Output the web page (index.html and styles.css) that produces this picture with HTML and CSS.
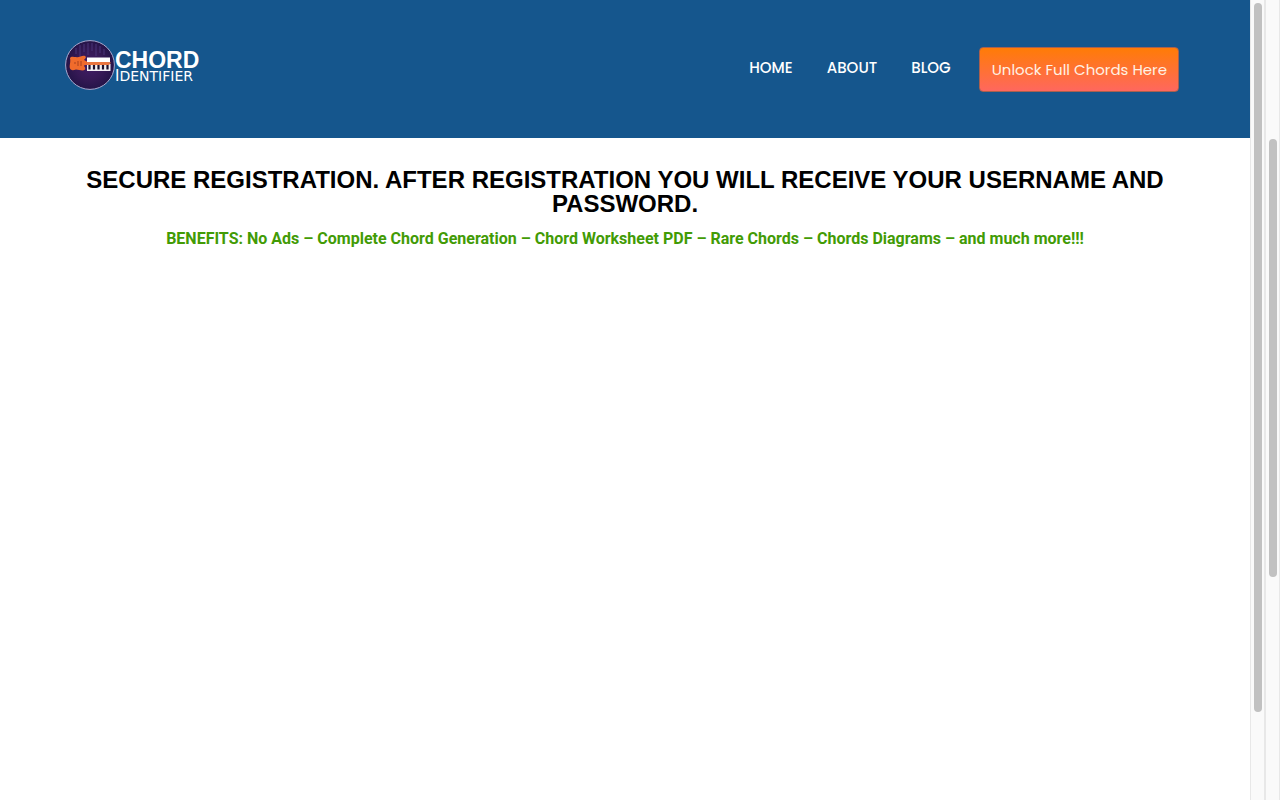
FILE: index.html
```html
<!DOCTYPE html>
<html lang="en">
<head>
  <meta charset="utf-8">
  <meta name="viewport" content="width=device-width, initial-scale=1">
  <title>Chord Identifier</title>
  <link rel="stylesheet" href="styles.css">
</head>
<body>
  <div class="page">
    <header class="site-header">
      <a class="logo" href="#">
        <svg class="logo-mark" viewBox="0 0 50 50" aria-hidden="true">
          <defs>
            <radialGradient id="disc">
              <stop offset="0" stop-color="#421d68"/>
              <stop offset="0.6" stop-color="#351955"/>
              <stop offset="1" stop-color="#251448"/>
            </radialGradient>
          </defs>
          <circle cx="25" cy="25" r="24.4" fill="url(#disc)" stroke="#a9a8cd" stroke-width="1"/>
          <path d="M11 8v6M15 5v12M19 4v8M23 3v12M27 3v8M31 4v12M35 6v7M39 9v6" stroke="#4d397d" stroke-width="1.5" opacity="0.6"/>
          <path d="M22 17.500h23v5H22z" fill="#fff"/>
          <path d="M22 24h23.500v7H22z" fill="#f3f0f4"/>
          <path d="M24.500 24v5.500M29 24v5.500M33.500 24v5.500M38 24v5.500M42.500 24v5.500" stroke="#1c102b" stroke-width="2.2"/>
          <path d="M17 22h25l4 .5-2 2.500H17z" fill="#e9753f"/>
          <path d="M5 18c1-2 4-1 6-1 3 1 6-2 9-1 2 1 0 3-1 4l3 1.500v3l-3 1c0 1 2 2 1 4-2 2-6 0-9 0-3 1-5 1-6-1-1-3 1-6 0-10.500z" fill="#f06b2c"/>
          <path d="M9 23h2M13 21v5M16 21v5" stroke="#a8431f" stroke-width="1"/>
        </svg>
        <span class="logo-text">
          <span class="logo-name">CHORD</span>
          <span class="logo-sub"><span class="logo-initial">I</span>DENTIFIER</span>
        </span>
      </a>
      <nav class="main-nav" aria-label="Main">
        <a class="nav-link" href="#">HOME</a>
        <a class="nav-link" href="#">ABOUT</a>
        <a class="nav-link" href="#">BLOG</a>
        <button class="unlock" type="button">Unlock Full Chords Here</button>
      </nav>
    </header>
    <main class="content">
      <h1 class="title">SECURE REGISTRATION. AFTER REGISTRATION YOU WILL RECEIVE YOUR USERNAME AND PASSWORD.</h1>
      <p class="benefits">BENEFITS: No Ads – Complete Chord Generation – Chord Worksheet PDF – Rare Chords – Chords Diagrams – and much more!!!</p>
    </main>
  </div>
  <div class="track track-inner" aria-hidden="true"><div class="thumb thumb-inner"></div></div>
  <div class="track track-outer" aria-hidden="true"><div class="thumb thumb-outer"></div></div>
</body>
</html>
```
FILE: styles.css
```css
* {
  box-sizing: border-box;
}

body {
  display: flex;
  min-height: 100vh;
  margin: 0;
  background: #fff;
  font-family: "Liberation Sans", Arial, sans-serif;
}

.page {
  flex: 1;
  min-width: 0;
}

.site-header {
  display: flex;
  justify-content: space-between;
  align-items: flex-start;
  padding: 40px 71px 46px 65px;
  background: #15568d;
}

.logo {
  display: flex;
  color: #fff;
  text-decoration: none;
}

.logo-mark {
  width: 50px;
  height: 50px;
}

.logo-text {
  display: flex;
  flex-direction: column;
  padding-top: 10px;
}

.logo-name {
  font-size: 23px;
  font-weight: 700;
  line-height: 20px;
}

.logo-sub {
  font-family: "DejaVu Sans", sans-serif;
  font-size: 14px;
  line-height: 12px;
}

.logo-initial {
  font-size: 15px;
}

.main-nav {
  display: flex;
  align-items: flex-start;
  gap: 34px;
  padding-top: 7px;
  font-family: Poppins, Lato, sans-serif;
}

.nav-link {
  color: #fff;
  font-size: 15px;
  font-weight: 500;
  line-height: 42px;
  text-decoration: none;
}

.unlock {
  height: 45px;
  margin-left: -6px;
  padding: 0 11px 0 12px;
  border: 1px solid #a8604f;
  border-radius: 4px;
  background: linear-gradient(#ff7c06, #ff675e);
  color: #fff1e4;
  font-family: inherit;
  font-size: 15px;
  line-height: 24px;
}

.content {
  padding: 30px 65px;
  text-align: center;
}

.title {
  margin: 0;
  color: #000;
  font-size: 24px;
  line-height: 24px;
}

.benefits {
  margin: 11px 0 0;
  color: #429b05;
  font-family: Roboto, sans-serif;
  font-size: 16px;
  font-weight: 700;
  line-height: 24px;
}

.track {
  display: flex;
  flex-direction: column;
  align-items: center;
  width: 15px;
  background: #fafafa;
  border-left: 1px solid #e8e8e8;
  border-right: 1px solid #e8e8e8;
}

.thumb {
  width: 8px;
  border-radius: 4px;
  background: #c1c1c1;
}

.thumb-inner {
  height: 709px;
  margin-top: 3px;
}

.thumb-outer {
  height: 438px;
  margin-top: 139px;
}
```
